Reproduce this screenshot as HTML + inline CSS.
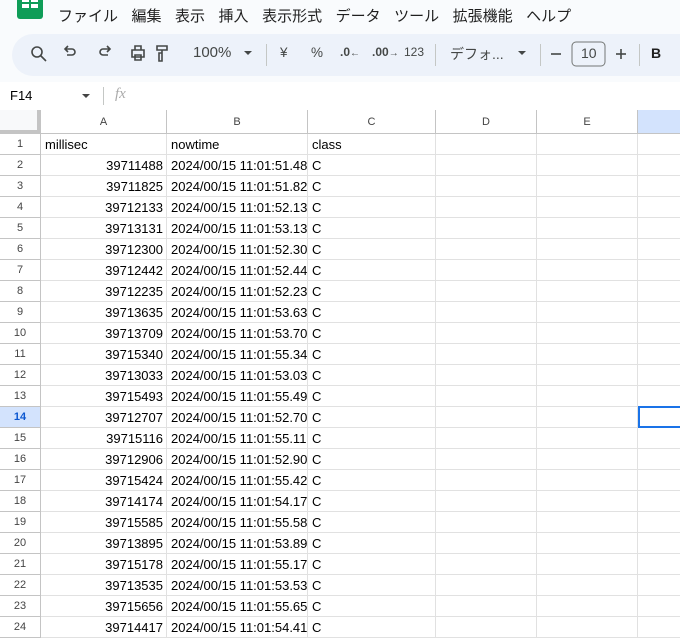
<!DOCTYPE html>
<html><head><meta charset="utf-8"><style>
*{margin:0;padding:0;box-sizing:border-box}
body{width:680px;height:635px;overflow:hidden;background:#fff;font-family:"Liberation Sans","Noto Sans CJK JP",sans-serif;position:relative;color:#000}
.top{position:absolute;left:0;top:0;width:680px;height:82px;background:#f9fbfd}
.logo{position:absolute;left:17px;top:-6px;width:26px;height:25px;background:#0f9d58;border-radius:3px}
.logo i{position:absolute;background:#fff}
.menu{position:absolute;top:5px;left:58px;font-size:15px;color:#1f1f1f;white-space:nowrap}
.menu span{margin-right:13.5px}
.tb{position:absolute;left:12px;top:34px;width:690px;height:42px;background:#edf2fa;border-radius:21px}
.t{position:absolute;top:45px;font-size:13.5px;color:#444746;white-space:nowrap}
.sep{position:absolute;top:44px;width:1px;height:22px;background:#c4c7c5}
.fb{position:absolute;left:0;top:82px;width:680px;height:28px;background:#fff}
.c{position:absolute;overflow:hidden;white-space:nowrap;font-size:13px;line-height:22px;height:21px;border-right:1px solid #e1e1e1;border-bottom:1px solid #e1e1e1;padding:0 3px 0 4px}
.rh{position:absolute;left:0;width:41px;height:21px;font-size:11px;color:#444;text-align:center;line-height:21px;border-right:1px solid #c4c4c4;border-bottom:1px solid #c4c4c4;background:#fff}
.ch{position:absolute;top:110px;height:24px;font-size:11px;color:#444;text-align:center;line-height:24px;border-right:1px solid #c4c4c4;border-bottom:1px solid #c4c4c4;background:#fff}
</style></head><body>
<div class="top">
 <div class="logo"><i style="left:5px;top:4px;width:7px;height:4px"></i><i style="left:14px;top:4px;width:7px;height:4px"></i><i style="left:5px;top:10px;width:7px;height:4px"></i><i style="left:14px;top:10px;width:7px;height:4px"></i></div>
 <div class="menu"><span>ファイル</span><span>編集</span><span>表示</span><span>挿入</span><span>表示形式</span><span>データ</span><span>ツール</span><span>拡張機能</span><span>ヘルプ</span></div>
 <div class="tb"></div>
 <svg style="position:absolute;left:0;top:34px" width="680" height="42" fill="none" stroke="#444746" stroke-width="1.6">
  <circle cx="37" cy="18" r="5"/><line x1="41" y1="22" x2="46" y2="27"/>
  <path d="M67 21 h5 a3 3 0 0 0 0-6 h-6 M68 12 l-3 3 3 3"/>
  <path d="M108 21 h-5 a3 3 0 0 1 0-6 h6 M107 12 l3 3-3 3"/>
  <path d="M132 16 h12 v7 h-12z M135 16 v-4 h6 v4 M135 21 h6 v5 h-6z"/>
  <path d="M157 12 h10 v4 h-10z M162 16 v3 h-3 v8 h3 v-8"/>
  <path d="M244 17 l4 4 4-4z" fill="#444746" stroke="none"/>
  <path d="M518 17 l4 4 4-4z" fill="#444746" stroke="none"/>
  <line x1="551" y1="20" x2="561" y2="20"/>
  <line x1="616" y1="20" x2="626" y2="20"/><line x1="621" y1="15" x2="621" y2="25"/>
  <rect x="572" y="8" width="33" height="24" rx="4" stroke="#747775" stroke-width="1"/>
 </svg>
 <div class="t" style="left:193px;font-size:15px;top:44px">100%</div>
 <div class="sep" style="left:266px"></div>
 <div class="t" style="left:280px">¥</div>
 <div class="t" style="left:311px">%</div>
 <div class="t" style="left:340px;font-weight:bold;font-size:12px">.0<span style="font-size:10px">←</span></div>
 <div class="t" style="left:372px;font-weight:bold;font-size:12px">.00<span style="font-size:10px">→</span></div>
 <div class="t" style="left:404px;font-size:12px">123</div>
 <div class="sep" style="left:435px"></div>
 <div class="t" style="left:450px;font-size:14px;top:44px">デフォ...</div>
 <div class="sep" style="left:540px"></div>
 <div class="t" style="left:581px;font-size:14px;top:45px">10</div>
 <div class="sep" style="left:639px"></div>
 <div class="t" style="left:651px;font-weight:bold;font-size:14px;color:#1f1f1f">B</div>
</div>
<div class="fb">
 <div style="position:absolute;left:10px;top:6px;font-size:13px">F14</div>
 <svg style="position:absolute;left:82px;top:12px" width="10" height="6"><path d="M0 0 l4 4 4-4z" fill="#444"/></svg>
 <div style="position:absolute;left:103px;top:5px;width:1px;height:18px;background:#c4c7c5"></div>
 <div style="position:absolute;left:115px;top:4px;font-size:15px;font-style:italic;color:#aaa;font-family:'Liberation Serif',serif">fx</div>
</div>
<div style="position:absolute;left:0;top:110px;width:37px;height:20px;background:#f8f9fa"></div>
<div style="position:absolute;left:37px;top:110px;width:4px;height:24px;background:#c4c4c4"></div>
<div style="position:absolute;left:0;top:130px;width:41px;height:4px;background:#c4c4c4"></div>
<div class="ch" style="left:41px;width:126px">A</div>
<div class="ch" style="left:167px;width:141px">B</div>
<div class="ch" style="left:308px;width:128px">C</div>
<div class="ch" style="left:436px;width:101px">D</div>
<div class="ch" style="left:537px;width:101px">E</div>
<div class="ch" style="left:638px;width:50px;background:#d3e3fd"></div>
<div class="rh" style="top:134px">1</div><div class="c" style="top:134px;left:41px;width:126px">millisec</div><div class="c" style="top:134px;left:167px;width:141px">nowtime</div><div class="c" style="top:134px;left:308px;width:128px">class</div><div class="c" style="top:134px;left:436px;width:101px"></div><div class="c" style="top:134px;left:537px;width:101px"></div><div class="c" style="top:134px;left:638px;width:50px"></div>
<div class="rh" style="top:155px">2</div><div class="c" style="top:155px;left:41px;width:126px;text-align:right">39711488</div><div class="c" style="top:155px;left:167px;width:141px">2024/00/15 11:01:51.488</div><div class="c" style="top:155px;left:308px;width:128px">C</div><div class="c" style="top:155px;left:436px;width:101px"></div><div class="c" style="top:155px;left:537px;width:101px"></div><div class="c" style="top:155px;left:638px;width:50px"></div>
<div class="rh" style="top:176px">3</div><div class="c" style="top:176px;left:41px;width:126px;text-align:right">39711825</div><div class="c" style="top:176px;left:167px;width:141px">2024/00/15 11:01:51.825</div><div class="c" style="top:176px;left:308px;width:128px">C</div><div class="c" style="top:176px;left:436px;width:101px"></div><div class="c" style="top:176px;left:537px;width:101px"></div><div class="c" style="top:176px;left:638px;width:50px"></div>
<div class="rh" style="top:197px">4</div><div class="c" style="top:197px;left:41px;width:126px;text-align:right">39712133</div><div class="c" style="top:197px;left:167px;width:141px">2024/00/15 11:01:52.133</div><div class="c" style="top:197px;left:308px;width:128px">C</div><div class="c" style="top:197px;left:436px;width:101px"></div><div class="c" style="top:197px;left:537px;width:101px"></div><div class="c" style="top:197px;left:638px;width:50px"></div>
<div class="rh" style="top:218px">5</div><div class="c" style="top:218px;left:41px;width:126px;text-align:right">39713131</div><div class="c" style="top:218px;left:167px;width:141px">2024/00/15 11:01:53.131</div><div class="c" style="top:218px;left:308px;width:128px">C</div><div class="c" style="top:218px;left:436px;width:101px"></div><div class="c" style="top:218px;left:537px;width:101px"></div><div class="c" style="top:218px;left:638px;width:50px"></div>
<div class="rh" style="top:239px">6</div><div class="c" style="top:239px;left:41px;width:126px;text-align:right">39712300</div><div class="c" style="top:239px;left:167px;width:141px">2024/00/15 11:01:52.300</div><div class="c" style="top:239px;left:308px;width:128px">C</div><div class="c" style="top:239px;left:436px;width:101px"></div><div class="c" style="top:239px;left:537px;width:101px"></div><div class="c" style="top:239px;left:638px;width:50px"></div>
<div class="rh" style="top:260px">7</div><div class="c" style="top:260px;left:41px;width:126px;text-align:right">39712442</div><div class="c" style="top:260px;left:167px;width:141px">2024/00/15 11:01:52.442</div><div class="c" style="top:260px;left:308px;width:128px">C</div><div class="c" style="top:260px;left:436px;width:101px"></div><div class="c" style="top:260px;left:537px;width:101px"></div><div class="c" style="top:260px;left:638px;width:50px"></div>
<div class="rh" style="top:281px">8</div><div class="c" style="top:281px;left:41px;width:126px;text-align:right">39712235</div><div class="c" style="top:281px;left:167px;width:141px">2024/00/15 11:01:52.235</div><div class="c" style="top:281px;left:308px;width:128px">C</div><div class="c" style="top:281px;left:436px;width:101px"></div><div class="c" style="top:281px;left:537px;width:101px"></div><div class="c" style="top:281px;left:638px;width:50px"></div>
<div class="rh" style="top:302px">9</div><div class="c" style="top:302px;left:41px;width:126px;text-align:right">39713635</div><div class="c" style="top:302px;left:167px;width:141px">2024/00/15 11:01:53.635</div><div class="c" style="top:302px;left:308px;width:128px">C</div><div class="c" style="top:302px;left:436px;width:101px"></div><div class="c" style="top:302px;left:537px;width:101px"></div><div class="c" style="top:302px;left:638px;width:50px"></div>
<div class="rh" style="top:323px">10</div><div class="c" style="top:323px;left:41px;width:126px;text-align:right">39713709</div><div class="c" style="top:323px;left:167px;width:141px">2024/00/15 11:01:53.709</div><div class="c" style="top:323px;left:308px;width:128px">C</div><div class="c" style="top:323px;left:436px;width:101px"></div><div class="c" style="top:323px;left:537px;width:101px"></div><div class="c" style="top:323px;left:638px;width:50px"></div>
<div class="rh" style="top:344px">11</div><div class="c" style="top:344px;left:41px;width:126px;text-align:right">39715340</div><div class="c" style="top:344px;left:167px;width:141px">2024/00/15 11:01:55.340</div><div class="c" style="top:344px;left:308px;width:128px">C</div><div class="c" style="top:344px;left:436px;width:101px"></div><div class="c" style="top:344px;left:537px;width:101px"></div><div class="c" style="top:344px;left:638px;width:50px"></div>
<div class="rh" style="top:365px">12</div><div class="c" style="top:365px;left:41px;width:126px;text-align:right">39713033</div><div class="c" style="top:365px;left:167px;width:141px">2024/00/15 11:01:53.033</div><div class="c" style="top:365px;left:308px;width:128px">C</div><div class="c" style="top:365px;left:436px;width:101px"></div><div class="c" style="top:365px;left:537px;width:101px"></div><div class="c" style="top:365px;left:638px;width:50px"></div>
<div class="rh" style="top:386px">13</div><div class="c" style="top:386px;left:41px;width:126px;text-align:right">39715493</div><div class="c" style="top:386px;left:167px;width:141px">2024/00/15 11:01:55.493</div><div class="c" style="top:386px;left:308px;width:128px">C</div><div class="c" style="top:386px;left:436px;width:101px"></div><div class="c" style="top:386px;left:537px;width:101px"></div><div class="c" style="top:386px;left:638px;width:50px"></div>
<div class="rh" style="top:407px;background:#d3e3fd;color:#0b57d0;font-weight:bold">14</div><div class="c" style="top:407px;left:41px;width:126px;text-align:right">39712707</div><div class="c" style="top:407px;left:167px;width:141px">2024/00/15 11:01:52.707</div><div class="c" style="top:407px;left:308px;width:128px">C</div><div class="c" style="top:407px;left:436px;width:101px"></div><div class="c" style="top:407px;left:537px;width:101px"></div><div class="c" style="top:406px;left:638px;width:50px;height:22px;border:2px solid #1a73e8"></div>
<div class="rh" style="top:428px">15</div><div class="c" style="top:428px;left:41px;width:126px;text-align:right">39715116</div><div class="c" style="top:428px;left:167px;width:141px">2024/00/15 11:01:55.116</div><div class="c" style="top:428px;left:308px;width:128px">C</div><div class="c" style="top:428px;left:436px;width:101px"></div><div class="c" style="top:428px;left:537px;width:101px"></div><div class="c" style="top:428px;left:638px;width:50px"></div>
<div class="rh" style="top:449px">16</div><div class="c" style="top:449px;left:41px;width:126px;text-align:right">39712906</div><div class="c" style="top:449px;left:167px;width:141px">2024/00/15 11:01:52.906</div><div class="c" style="top:449px;left:308px;width:128px">C</div><div class="c" style="top:449px;left:436px;width:101px"></div><div class="c" style="top:449px;left:537px;width:101px"></div><div class="c" style="top:449px;left:638px;width:50px"></div>
<div class="rh" style="top:470px">17</div><div class="c" style="top:470px;left:41px;width:126px;text-align:right">39715424</div><div class="c" style="top:470px;left:167px;width:141px">2024/00/15 11:01:55.424</div><div class="c" style="top:470px;left:308px;width:128px">C</div><div class="c" style="top:470px;left:436px;width:101px"></div><div class="c" style="top:470px;left:537px;width:101px"></div><div class="c" style="top:470px;left:638px;width:50px"></div>
<div class="rh" style="top:491px">18</div><div class="c" style="top:491px;left:41px;width:126px;text-align:right">39714174</div><div class="c" style="top:491px;left:167px;width:141px">2024/00/15 11:01:54.174</div><div class="c" style="top:491px;left:308px;width:128px">C</div><div class="c" style="top:491px;left:436px;width:101px"></div><div class="c" style="top:491px;left:537px;width:101px"></div><div class="c" style="top:491px;left:638px;width:50px"></div>
<div class="rh" style="top:512px">19</div><div class="c" style="top:512px;left:41px;width:126px;text-align:right">39715585</div><div class="c" style="top:512px;left:167px;width:141px">2024/00/15 11:01:55.585</div><div class="c" style="top:512px;left:308px;width:128px">C</div><div class="c" style="top:512px;left:436px;width:101px"></div><div class="c" style="top:512px;left:537px;width:101px"></div><div class="c" style="top:512px;left:638px;width:50px"></div>
<div class="rh" style="top:533px">20</div><div class="c" style="top:533px;left:41px;width:126px;text-align:right">39713895</div><div class="c" style="top:533px;left:167px;width:141px">2024/00/15 11:01:53.895</div><div class="c" style="top:533px;left:308px;width:128px">C</div><div class="c" style="top:533px;left:436px;width:101px"></div><div class="c" style="top:533px;left:537px;width:101px"></div><div class="c" style="top:533px;left:638px;width:50px"></div>
<div class="rh" style="top:554px">21</div><div class="c" style="top:554px;left:41px;width:126px;text-align:right">39715178</div><div class="c" style="top:554px;left:167px;width:141px">2024/00/15 11:01:55.178</div><div class="c" style="top:554px;left:308px;width:128px">C</div><div class="c" style="top:554px;left:436px;width:101px"></div><div class="c" style="top:554px;left:537px;width:101px"></div><div class="c" style="top:554px;left:638px;width:50px"></div>
<div class="rh" style="top:575px">22</div><div class="c" style="top:575px;left:41px;width:126px;text-align:right">39713535</div><div class="c" style="top:575px;left:167px;width:141px">2024/00/15 11:01:53.535</div><div class="c" style="top:575px;left:308px;width:128px">C</div><div class="c" style="top:575px;left:436px;width:101px"></div><div class="c" style="top:575px;left:537px;width:101px"></div><div class="c" style="top:575px;left:638px;width:50px"></div>
<div class="rh" style="top:596px">23</div><div class="c" style="top:596px;left:41px;width:126px;text-align:right">39715656</div><div class="c" style="top:596px;left:167px;width:141px">2024/00/15 11:01:55.656</div><div class="c" style="top:596px;left:308px;width:128px">C</div><div class="c" style="top:596px;left:436px;width:101px"></div><div class="c" style="top:596px;left:537px;width:101px"></div><div class="c" style="top:596px;left:638px;width:50px"></div>
<div class="rh" style="top:617px">24</div><div class="c" style="top:617px;left:41px;width:126px;text-align:right">39714417</div><div class="c" style="top:617px;left:167px;width:141px">2024/00/15 11:01:54.417</div><div class="c" style="top:617px;left:308px;width:128px">C</div><div class="c" style="top:617px;left:436px;width:101px"></div><div class="c" style="top:617px;left:537px;width:101px"></div><div class="c" style="top:617px;left:638px;width:50px"></div>
</body></html>
